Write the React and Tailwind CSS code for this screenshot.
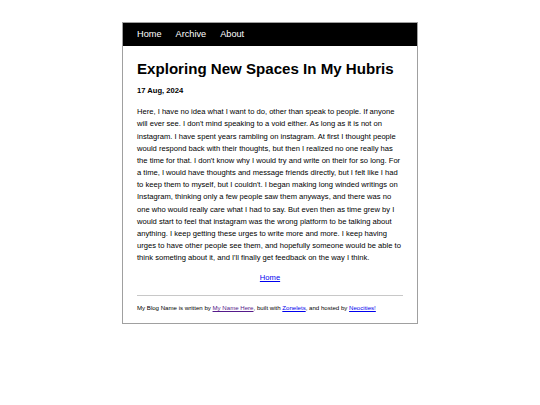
export default function App() {
  return (
    <div className="w-[540px] h-[405px] bg-white font-['Liberation_Sans',Arial,sans-serif] text-black">
      <div className="pt-[22px] flex justify-center">
        <div className="w-[296px] border border-[#a0a0a0]">
          <nav className="h-[23px] bg-black px-[14px] flex items-center gap-[14px] text-white text-[9.2px] leading-none">
            <a>Home</a>
            <a>Archive</a>
            <a>About</a>
          </nav>
          <div className="px-[14px]">
            <h1 className="mt-[14px] text-[15.1px] font-bold leading-[1.2]">Exploring New Spaces In My Hubris</h1>
            <p className="mt-[7px] text-[7.6px] font-bold leading-[12.16px]">17 Aug, 2024</p>
            <p className="mt-[9px] text-[7.6px] leading-[12.16px]">
              Here, I have no idea what I want to do, other than speak to people. If anyone will ever see. I don't mind speaking to a void either. As long as it is not on instagram. I have spent years rambling on instagram. At first I thought people would respond back with their thoughts, but then I realized no one really has the time for that. I don't know why I would try and write on their for so long. For a time, I would have thoughts and message friends directly, but I felt like I had to keep them to myself, but I couldn't. I began making long winded writings on Instagram, thinking only a few people saw them anyways, and there was no one who would really care what I had to say. But even then as time grew by I would start to feel that instagram was the wrong platform to be talking about anything. I keep getting these urges to write more and more. I keep having urges to have other people see them, and hopefully someone would be able to think someting about it, and I'll finally get feedback on the way I think.
            </p>
            <p className="mt-[8px] text-center text-[7.6px] leading-[12.16px]">
              <a className="text-[#0000ee] underline">Home</a>
            </p>
            <hr className="mt-[11px] border-0 border-t border-[#c8c8c8]" />
            <p className="mt-[7px] pb-[10px] text-[6.1px] leading-[9.6px]">
              My Blog Name is written by <a className="text-[#551a8b] underline">My Name Here</a>, built with <a className="text-[#0000ee] underline">Zonelets</a>, and hosted by <a className="text-[#0000ee] underline">Neocities!</a>
            </p>
          </div>
        </div>
      </div>
    </div>
  );
}
